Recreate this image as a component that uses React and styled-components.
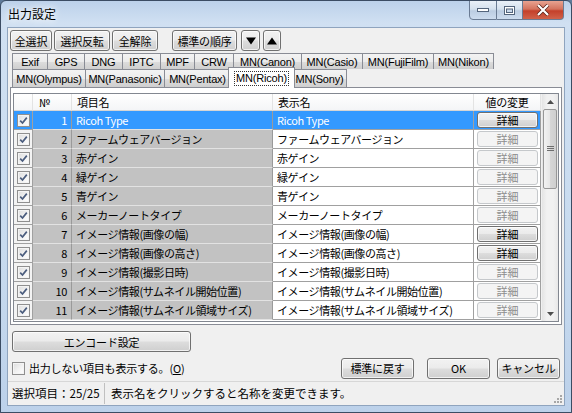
import React from 'react';
import styled, {createGlobalStyle, css} from 'styled-components';

const GlobalStyle = createGlobalStyle`
  html, body {
    margin: 0;
    padding: 0;
    width: 572px;
    height: 413px;
    overflow: hidden;
    background: #5f7a99;
  }
  body {
    font-family: "Noto Sans CJK JP", "Noto Sans", sans-serif;
    font-size: 11px;
    color: #000;
  }
  * { box-sizing: border-box; }
`;

const Window = styled.div`
  width: 572px;
  height: 413px;
  display: flex;
  flex-direction: column;
  border: 1px solid #3b4c63;
  border-radius: 6px 6px 0 0;
  background: linear-gradient(180deg, #bcd1ea 0, #d0e0f2 22px, #c8dbef 60%, #bcd1ea 100%);
  overflow: hidden;
`;

const TitleBar = styled.div`
  height: 27px;
  flex: none;
  display: flex;
  justify-content: space-between;
  align-items: flex-start;
  padding: 0 7px 0 7px;
`;

const Title = styled.div`
  margin-top: 5px;
  font-size: 12px;
  line-height: 16px;
  text-shadow: 0 0 6px #fff, 0 0 10px #fff;
`;

const Controls = styled.div`
  display: flex;
  margin-top: -1px;
`;

const CtrlButton = styled.div`
  width: ${p => p.w}px;
  height: 20px;
  display: flex;
  align-items: center;
  justify-content: center;
  border: 1px solid #6a7b93;
  border-left: ${p => (p.first ? '1px solid #6a7b93' : 'none')};
  border-radius: ${p => p.radius || '0'};
  background: ${p => (p.close
    ? 'linear-gradient(180deg, #e8a391 0, #d4735e 45%, #c4402a 55%, #d0624a 100%)'
    : 'linear-gradient(180deg, #e9f0f8 0, #d5e1ee 45%, #bccde2 55%, #cddcee 100%)')};
`;

const Client = styled.div`
  flex: 1;
  margin: 0 7px 7px 7px;
  background: #f0f0f0;
  box-shadow: 0 0 0 1px #8fa4be;
  display: flex;
  flex-direction: column;
  padding: 0 2px;
`;

const Toolbar = styled.div`
  margin-top: 2px;
  height: 21px;
  display: flex;
  gap: 2px;
`;

const buttonLook = css`
  border: 1px solid #707070;
  border-radius: 3px;
  background: linear-gradient(180deg, #f2f2f2 0%, #ebebeb 48%, #dddddd 52%, #cfcfcf 100%);
  box-shadow: inset 0 0 0 1px rgba(255, 255, 255, 0.7);
`;

const Button = styled.div`
  ${buttonLook};
  width: ${p => p.w}px;
  height: ${p => p.h || 21}px;
  margin-left: ${p => p.ml || 0}px;
  display: flex;
  align-items: center;
  justify-content: center;
  font-size: 11px;
  letter-spacing: -0.2px;
  flex: none;
`;

const Tabs = styled.div`
  margin-top: 2px;
  display: flex;
  flex-direction: column;
`;

const TabRow = styled.div`
  display: flex;
  height: ${p => p.h}px;
  padding-left: 2px;
  align-items: flex-end;
`;

const Tab = styled.div`
  width: ${p => p.w}px;
  height: ${p => p.h}px;
  margin-right: -1px;
  border: 1px solid #898c95;
  border-bottom: none;
  background: linear-gradient(180deg, #f3f3f3 0, #ebebeb 50%, #dddddd 51%, #cfcfcf 100%);
  display: flex;
  align-items: center;
  justify-content: center;
  font-family: "Liberation Sans", "Noto Sans", sans-serif;
  font-size: 11px;
  letter-spacing: -0.2px;
  flex: none;
  ${p => p.active && css`
    position: relative;
    z-index: 2;
    height: ${p.h + 3}px;
    margin: 0 -3px -1px -2px;
    width: ${p.w + 4}px;
    background: #fff;
  `}
`;

const Focus = styled.span`
  outline: 1px dotted #333;
  padding: 0 1px;
  line-height: 13px;
`;

const Panel = styled.div`
  height: 238px;
  border: 1px solid #898c95;
  background: #fff;
  padding: 5px 2px 2px 2px;
`;

const Grid = styled.div`
  height: 229px;
  border: 1px solid #828790;
  display: flex;
  background: #fff;
`;

const DataArea = styled.div`
  width: 527px;
  flex: none;
  overflow: hidden;
`;

const COLS = '19px 39px 201px 201px 67px';

const HeaderRow = styled.div`
  display: grid;
  grid-template-columns: ${COLS};
  height: 17px;
`;

const HeadCell = styled.div`
  border-right: 1px solid #e3e3e3;
  border-bottom: 1px solid #d5d5d5;
  background: linear-gradient(180deg, #ffffff, #f4f5f7);
  display: flex;
  align-items: center;
  justify-content: ${p => (p.center ? 'center' : 'flex-start')};
  padding-left: ${p => (p.center ? 0 : p.pl || 5)}px;
  font-size: 11px;
  line-height: 16px;
  letter-spacing: -0.3px;
`;

const Row = styled.div`
  display: grid;
  grid-template-columns: ${COLS};
  height: 19px;
`;

const Cell = styled.div`
  border-right: 1px solid ${p => (p.kind === 'gray' ? '#9a9a9a' : '#a0a0a0')};
  border-bottom: 1px solid ${p => (p.kind === 'gray' ? '#e2e2e2' : '#a0a0a0')};
  background: ${p => (p.sel ? '#3399ff' : p.kind === 'gray' ? '#c2c2c2' : p.kind === 'check' ? '#f3f3f3' : '#fff')};
  color: ${p => (p.sel ? '#fff' : '#000')};
  display: flex;
  align-items: center;
  justify-content: ${p => (p.right ? 'flex-end' : p.center ? 'center' : 'flex-start')};
  padding: ${p => (p.right ? '0 4px 0 0' : p.center ? '0' : '0 0 0 4px')};
  font-size: 11px;
  line-height: 18px;
  letter-spacing: -0.4px;
  white-space: nowrap;
  overflow: hidden;
`;

const ButtonCell = styled(Cell)`
  padding: 1px 2px 1px 3px;
  align-items: stretch;
`;

const DetailButton = styled.div`
  flex: 1;
  display: flex;
  align-items: center;
  justify-content: center;
  font-size: 11px;
  letter-spacing: 0;
  border-radius: 3px;
  ${p => (p.enabled
    ? css`
        ${buttonLook};
        color: #000;
      `
    : css`
        border: 1px solid #c5c8cb;
        background: #f4f4f4;
        color: #8d8d8d;
      `)}
`;

const ScrollBar = styled.div`
  width: 17px;
  flex: none;
  display: flex;
  flex-direction: column;
  background: linear-gradient(90deg, #e4e4e4 0, #f1f1f1 30%, #f1f1f1 70%, #e8e8e8 100%);
  border-left: 1px solid #f0f0f0;
`;

const Arrow = styled.div`
  height: 15px;
  display: flex;
  align-items: center;
  justify-content: center;
  flex: none;
`;

const Thumb = styled.div`
  height: 80px;
  margin: 0 1px;
  border: 1px solid #979797;
  border-radius: 2px;
  background: linear-gradient(90deg, #f2f2f2 0, #e6e6e6 50%, #d6d6d6 51%, #cfcfcf 100%);
  display: flex;
  align-items: center;
  justify-content: center;
`;

const Track = styled.div`
  flex: 1;
`;

const EncodeButton = styled(Button)`
  margin: 6px 0 0 2px;
`;

const OptionRow = styled.div`
  margin-top: 4px;
  height: 24px;
  display: flex;
  align-items: center;
  padding: 0 2px;
`;

const OptionLabel = styled.label`
  display: flex;
  align-items: center;
  gap: 4px;
  font-size: 11px;
  letter-spacing: -0.2px;
  flex: 1;
`;

const BoxWrap = styled.span`
  width: 13px;
  height: 13px;
  display: inline-flex;
  align-items: center;
  justify-content: center;
  border: 1px solid #8f8f8f;
  background: linear-gradient(135deg, #dcdcdc 0, #f4f4f4 60%, #ffffff 100%);
  box-shadow: inset 0 0 0 1px #f4f4f4;
  flex: none;
`;

const StatusBar = styled.div`
  margin: 1px -2px 0 -2px;
  height: 24px;
  border-top: 1px solid #d7d7d7;
  display: flex;
  align-items: center;
  font-size: 11.5px;
  padding-left: 4px;
  position: relative;
`;

const StatusPane = styled.div`
  width: ${p => p.w ? `${p.w}px` : 'auto'};
  flex: ${p => (p.w ? 'none' : 1)};
  border-right: ${p => (p.w ? '1px solid #c0c0c0' : 'none')};
  padding-left: ${p => p.pl || 0}px;
  line-height: 20px;
  height: 21px;
`;

const Grip = styled.svg`
  position: absolute;
  right: 2px;
  bottom: 2px;
`;

const CheckBox = ({checked}) => (
  <BoxWrap>
    {checked && (
      <svg width="9" height="9" viewBox="0 0 9 9">
        <path d="M1.2 4.6 L3.5 7 L7.8 1.6" fill="none" stroke="#4b5d7e" strokeWidth="1.7"/>
      </svg>
    )}
  </BoxWrap>
);

const Tri = ({up}) => (
  <svg width="10" height="8" viewBox="0 0 10 8">
    <path d={up ? 'M0 7.5 L5 0.5 L10 7.5 Z' : 'M0 0.5 L10 0.5 L5 7.5 Z'} fill="#000"/>
  </svg>
);

const SmallTri = ({up}) => (
  <svg width="7" height="4" viewBox="0 0 7 4">
    <path d={up ? 'M0 4 L3.5 0 L7 4 Z' : 'M0 0 L7 0 L3.5 4 Z'} fill="#4d4d4d"/>
  </svg>
);

const tabs1 = [
  ['Exif', 36], ['GPS', 38], ['DNG', 39], ['IPTC', 39], ['MPF', 35], ['CRW', 40],
  ['MN(Canon)', 69], ['MN(Casio)', 62], ['MN(FujiFilm)', 72], ['MN(Nikon)', 61]
];

const tabs2 = [
  ['MN(Olympus)', 74], ['MN(Panasonic)', 80], ['MN(Pentax)', 67], ['MN(Ricoh)', 63, true], ['MN(Sony)', 55]
];

const items = [
  {name: 'Ricoh Type', on: true},
  {name: 'ファームウェアバージョン'},
  {name: '赤ゲイン'},
  {name: '緑ゲイン'},
  {name: '青ゲイン'},
  {name: 'メーカーノートタイプ'},
  {name: 'イメージ情報(画像の幅)', on: true},
  {name: 'イメージ情報(画像の高さ)', on: true},
  {name: 'イメージ情報(撮影日時)'},
  {name: 'イメージ情報(サムネイル開始位置)'},
  {name: 'イメージ情報(サムネイル領域サイズ)'}
];

export default function App() {
  return (
    <>
      <GlobalStyle/>
      <Window>
        <TitleBar>
          <Title>出力設定</Title>
          <Controls>
            <CtrlButton w={28} first radius="0 0 0 4px">
              <svg width="12" height="4" viewBox="0 0 12 4">
                <rect x="0.5" y="0.5" width="11" height="3" fill="#fff" stroke="#54657c"/>
              </svg>
            </CtrlButton>
            <CtrlButton w={26}>
              <svg width="11" height="9" viewBox="0 0 11 9">
                <rect x="0.5" y="0.5" width="10" height="8" fill="#fff" stroke="#54657c"/>
                <rect x="2.5" y="3" width="6" height="3.5" fill="#c9d8ea" stroke="#54657c"/>
              </svg>
            </CtrlButton>
            <CtrlButton w={41} close radius="0 0 4px 0">
              <svg width="14" height="12" viewBox="0 0 14 12">
                <path d="M2 1 L12 11 M12 1 L2 11" stroke="#5a2218" strokeWidth="3.6"/>
                <path d="M2 1 L12 11 M12 1 L2 11" stroke="#fff" strokeWidth="2.2"/>
              </svg>
            </CtrlButton>
          </Controls>
        </TitleBar>
        <Client>
          <Toolbar>
            <Button w={42}>全選択</Button>
            <Button w={56}>選択反転</Button>
            <Button w={46}>全解除</Button>
            <Button w={65} ml={12}>標準の順序</Button>
            <Button w={19} ml={2}><Tri/></Button>
            <Button w={18} ml={1}><Tri up/></Button>
          </Toolbar>
          <Tabs>
            <TabRow h={16}>
              {tabs1.map(([label, w]) => (
                <Tab key={label} w={w} h={16}>{label}</Tab>
              ))}
            </TabRow>
            <TabRow h={18}>
              {tabs2.map(([label, w, active]) => (
                <Tab key={label} w={w} h={18} active={active}>
                  {active ? <Focus>{label}</Focus> : label}
                </Tab>
              ))}
            </TabRow>
          </Tabs>
          <Panel>
            <Grid>
              <DataArea>
                <HeaderRow>
                  <HeadCell/>
                  <HeadCell pl={6}>№</HeadCell>
                  <HeadCell>項目名</HeadCell>
                  <HeadCell>表示名</HeadCell>
                  <HeadCell center>値の変更</HeadCell>
                </HeaderRow>
                {items.map((it, i) => {
                  const sel = i === 0;
                  return (
                    <Row key={i}>
                      <Cell kind="check" center sel={sel}><CheckBox checked/></Cell>
                      <Cell kind="gray" right sel={sel}>{i + 1}</Cell>
                      <Cell kind="gray" sel={sel}>{it.name}</Cell>
                      <Cell sel={sel}>{it.name}</Cell>
                      <ButtonCell sel={sel}>
                        <DetailButton enabled={it.on}>詳細</DetailButton>
                      </ButtonCell>
                    </Row>
                  );
                })}
              </DataArea>
              <ScrollBar>
                <Arrow><SmallTri up/></Arrow>
                <Thumb>
                  <svg width="7" height="6" viewBox="0 0 7 6">
                    <path d="M0 0.5 H7 M0 2.5 H7 M0 4.5 H7" stroke="#6e6e6e" strokeWidth="1"/>
                  </svg>
                </Thumb>
                <Track/>
                <Arrow><SmallTri/></Arrow>
              </ScrollBar>
            </Grid>
          </Panel>
          <EncodeButton w={179}>エンコード設定</EncodeButton>
          <OptionRow>
            <OptionLabel>
              <CheckBox/>
              <span>出力しない項目も表示する。(<u>O</u>)</span>
            </OptionLabel>
            <Button w={73}>標準に戻す</Button>
            <Button w={63} ml={13}>OK</Button>
            <Button w={63} ml={7}>キャンセル</Button>
          </OptionRow>
          <StatusBar>
            <StatusPane w={93}>選択項目：25/25</StatusPane>
            <StatusPane pl={6}>表示名をクリックすると名称を変更できます。</StatusPane>
            <Grip width="10" height="10" viewBox="0 0 10 10">
              {[[8, 2], [8, 5], [5, 5], [8, 8], [5, 8], [2, 8]].map(([x, y]) => (
                <rect key={`${x}-${y}`} x={x} y={y} width="2" height="2" fill="#a7a7a7"/>
              ))}
            </Grip>
          </StatusBar>
        </Client>
      </Window>
    </>
  );
}
